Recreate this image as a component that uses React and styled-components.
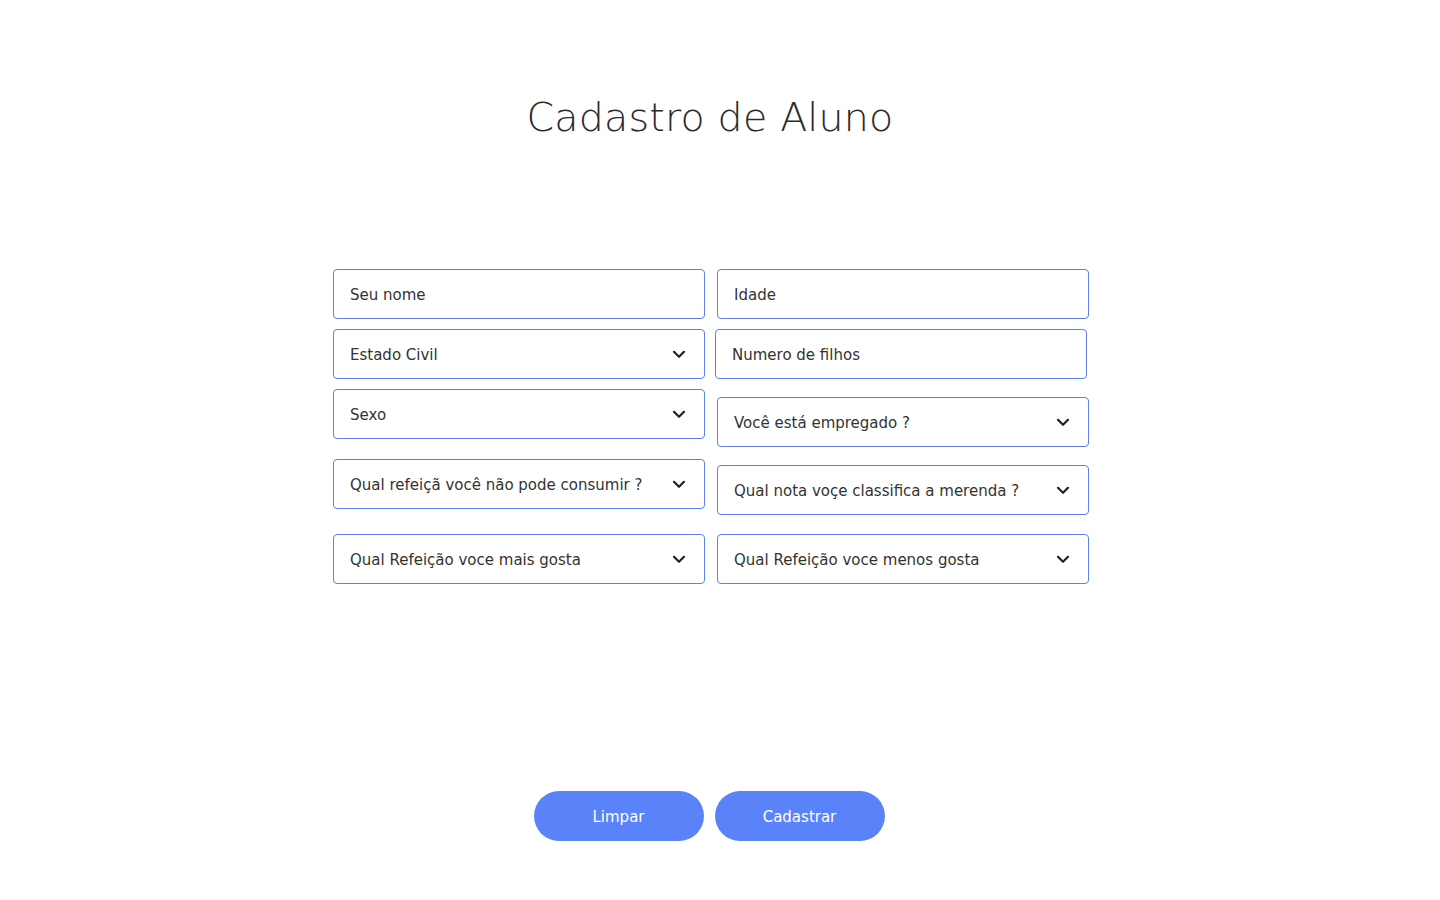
import styled, { createGlobalStyle } from "styled-components";

const GlobalStyle = createGlobalStyle`
    * {
        box-sizing: border-box;
    }

    body {
        margin: 0;
        background: #fff;
        font-family: "DejaVu Sans", "Noto Sans", sans-serif;
        color: #333;
    }
`;

const Chevron = () => (
    <svg width="14" height="9" viewBox="0 0 14 9" fill="none">
        <path d="M2 1.8 L7 6.8 L12 1.8" stroke="#222" strokeWidth="2.2" strokeLinecap="round" strokeLinejoin="round" />
    </svg>
);

const Field = ({ label, top, shift }) => (
    <InputBox $top={top} $shift={shift}>
        <input placeholder={label} />
    </InputBox>
);

const Select = ({ label, top }) => (
    <SelectBox $top={top}>
        <span>{label}</span>
        <Chevron />
    </SelectBox>
);

export default function App() {
    return (
        <>
            <GlobalStyle />
            <Page>
                <Title>Cadastro de Aluno</Title>
                <Form>
                    <Column>
                        <Field label="Seu nome" top={0} />
                        <Select label="Estado Civil" top={10} />
                        <Select label="Sexo" top={10} />
                        <Select label="Qual refeiçã você não pode consumir ?" top={20} />
                        <Select label="Qual Refeição voce mais gosta" top={25} />
                    </Column>
                    <Column>
                        <Field label="Idade" top={0} />
                        <Field label="Numero de filhos" top={10} shift={-2} />
                        <Select label="Você está empregado ?" top={18} />
                        <Select label="Qual nota voçe classifica a merenda ?" top={18} />
                        <Select label="Qual Refeição voce menos gosta" top={19} />
                    </Column>
                </Form>
                <Actions>
                    <Button type="button">Limpar</Button>
                    <Button type="button">Cadastrar</Button>
                </Actions>
            </Page>
        </>
    );
}

const Page = styled.div`
    width: 1422px;
    min-height: 900px;
    padding-top: 91px;
    display: flex;
    flex-direction: column;
    align-items: center;
`;

const Title = styled.h1`
    margin: 0;
    font-size: 39.5px;
    font-weight: 200;
    line-height: 52px;
    color: #2b2b2b;
    letter-spacing: 0.2px;
    transform: translateX(-1px);
`;

const Form = styled.div`
    margin-top: 126px;
    display: grid;
    grid-template-columns: 372px 372px;
    column-gap: 12px;
`;

const Column = styled.div`
    display: flex;
    flex-direction: column;
    align-items: flex-start;
`;

const boxBase = `
    width: 372px;
    height: 50px;
    border: 1px solid #5c7ff1;
    border-radius: 4px;
    background: #fff;
    font-size: 15px;
    color: #333;
`;

const InputBox = styled.div`
    ${boxBase}
    margin-top: ${(p) => p.$top}px;
    margin-left: ${(p) => p.$shift || 0}px;
    display: flex;

    input {
        flex: 1;
        min-width: 0;
        border: none;
        outline: none;
        background: transparent;
        padding: 1px 16px 0;
        font: inherit;
        color: inherit;
    }

    input::placeholder {
        color: #333;
    }
`;

const SelectBox = styled.div`
    ${boxBase}
    margin-top: ${(p) => p.$top}px;
    display: flex;
    align-items: center;
    justify-content: space-between;
    padding: 1px 18px 0 16px;
    cursor: pointer;
`;

const Actions = styled.div`
    margin-top: 207px;
    margin-right: 4px;
    display: flex;
    gap: 11px;
`;

const Button = styled.button`
    width: 170px;
    height: 50px;
    padding-top: 2px;
    border: none;
    border-radius: 25px;
    background: #5a83f9;
    color: #fff;
    font-family: "DejaVu Sans", "Noto Sans", sans-serif;
    font-size: 15px;
    cursor: pointer;
`;
